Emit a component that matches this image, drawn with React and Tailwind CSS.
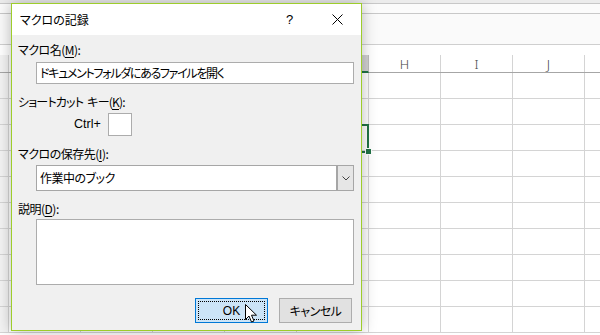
const font = { fontFamily: "'Noto Sans CJK JP', 'Noto Sans', sans-serif" };

const cols = ['C', 'D', 'E', 'F', 'G', 'H', 'I', 'J', 'K'];
const shown = ['H', 'I', 'J'];
const rows = [1, 2, 3, 4, 5, 6, 7, 8, 9, 10];

function Sheet() {
  return (
    <div className="flex flex-col">
      <div className="h-[3px] bg-[#ececec]" />
      <div className="h-[11px] bg-[#fbfbfb] border-y border-[#c8c8c8]" />
      <div className="h-[31px] bg-[#fafafa] border-b border-[#cfcfcf]" />
      <div className="h-[10px] bg-white" />
      {/* column headers */}
      <div className="flex h-[18px] border-b border-[#a6a6a6]">
        <div className="w-[9px] shrink-0 border-r border-[#d4d4d4] bg-[#f3f3f3]" />
        {cols.map((c) => (
          <div
            key={c}
            className={
              c === 'G'
                ? 'w-[72px] shrink-0 border-r border-[#bdbdbd] bg-[#d2d2d2] border-b-2 border-b-[#217346] -mb-px'
                : 'w-[72px] shrink-0 border-r border-[#d4d4d4] flex items-center justify-center pt-px text-[13px] text-[#444] leading-none'
            }
            style={{ fontFamily: "'Noto Sans', sans-serif", fontWeight: 300 }}
          >
            {shown.includes(c) ? c : ''}
          </div>
        ))}
      </div>
      {rows.map((r) => (
        <div key={r} className="flex h-[26px] border-b border-[#d4d4d4]">
          <div className="w-[9px] shrink-0 border-r border-[#d4d4d4] bg-[#f3f3f3]" />
          {cols.map((c) => (
            <div key={c} className="w-[72px] shrink-0 border-r border-[#d4d4d4]" />
          ))}
        </div>
      ))}
    </div>
  );
}

function U({ children }) {
  return <span className="underline underline-offset-2">{children}</span>;
}

function Cursor() {
  return (
    <svg width="13" height="20" viewBox="0 0 13 20" className="absolute left-[245px] top-[304px]">
      <path
        d="M0.5 0.5 L0.5 15.5 L4 12 L6.5 18 L9 17 L6.5 11.2 L11.5 11.2 Z"
        fill="#fff"
        stroke="#000"
        strokeWidth="1"
        strokeLinejoin="miter"
      />
    </svg>
  );
}

function Dialog() {
  return (
    <div
      className="absolute left-[11px] top-[3px] w-[351px] h-[328px] border border-[#9dcd2b] bg-[#f0f0f0] flex flex-col shadow-[0_0_14px_rgba(0,0,0,0.28)] text-[12px] text-black tracking-[-0.5px] [font-feature-settings:'palt']"
      style={font}
    >
      {/* title bar */}
      <div className="h-[31px] bg-white flex items-center pl-[8px]">
        <span className="flex-1 leading-none tracking-normal">マクロの記録</span>
        <span className="w-[10px] text-[13px] leading-none mr-[36px]" style={{ fontFamily: "'Liberation Sans', sans-serif" }}>?</span>
        <svg width="11" height="11" viewBox="0 0 11 11" className="mr-[18px]">
          <path d="M0.5 0.5 L10.5 10.5 M10.5 0.5 L0.5 10.5" stroke="#000" strokeWidth="1" />
        </svg>
      </div>

      {/* body */}
      <div className="flex flex-col pl-[6px] pr-[7px] pt-[7px]">
        <div className="h-[16px] leading-[16px]">マクロ名(<U>M</U>):</div>
        <div className="mt-[4px] ml-[18px] h-[22px] bg-white border border-[#acacac] flex items-center pl-[3px] tracking-[-1.3px]">
          ドキュメントフォルダにあるファイルを開く
        </div>

        <div className="mt-[10px] h-[16px] leading-[16px] tracking-[-0.8px]">
          ショートカット<span className="ml-[4px]">キー(<U>K</U>):</span>
        </div>
        <div className="mt-[3px] flex items-center">
          <span className="ml-[56px] w-[28px] text-[12.5px] tracking-normal" style={{ fontFamily: "'Liberation Sans', sans-serif" }}>Ctrl+</span>
          <div className="ml-[6px] w-[24px] h-[23px] bg-white border border-[#acacac]" />
        </div>

        <div className="mt-[10px] h-[16px] leading-[16px]">マクロの保存先(<U>I</U>):</div>
        <div className="mt-[3px] ml-[18px] h-[26px] bg-white border border-[#a6a6a6] flex">
          <div className="flex-1 flex items-center pl-[3px]">作業中のブック</div>
          <div className="w-[17px] bg-[#e6e6e6] border-l-2 border-[#a6a6a6] flex items-center justify-center">
            <svg width="8" height="5" viewBox="0 0 8 5">
              <path d="M0.5 0.5 L4 4 L7.5 0.5" fill="none" stroke="#444" strokeWidth="1" />
            </svg>
          </div>
        </div>

        <div className="mt-[10px] h-[16px] leading-[16px]">説明(<U>D</U>):</div>
        <div className="mt-[2px] ml-[18px] h-[66px] bg-white border border-[#acacac]" />

        <div className="mt-[13px] mr-[2px] flex justify-end gap-[11px]">
          <div className="w-[73px] h-[25px] bg-[#cce4f7] border border-[#0078d7] p-[2px]">
            <div className="w-full h-full border border-dotted border-black flex items-center justify-center tracking-normal" style={{ fontFamily: "'Liberation Sans', sans-serif" }}>
              OK
            </div>
          </div>
          <div className="w-[73px] h-[25px] bg-[#e1e1e1] border border-[#adadad] flex items-center justify-center">
            キャンセル
          </div>
        </div>
      </div>
    </div>
  );
}

export default function App() {
  return (
    <div className="relative w-[600px] h-[335px] overflow-hidden bg-white">
      <Sheet />
      {/* selected cell G3 */}
      <div className="absolute left-[295px] top-[124px] w-[74px] h-[29px] border-2 border-[#217346]" />
      <div className="absolute left-[365px] top-[148px] w-[7px] h-[7px] bg-[#217346] border border-white" />
      <Dialog />
      <Cursor />
    </div>
  );
}
